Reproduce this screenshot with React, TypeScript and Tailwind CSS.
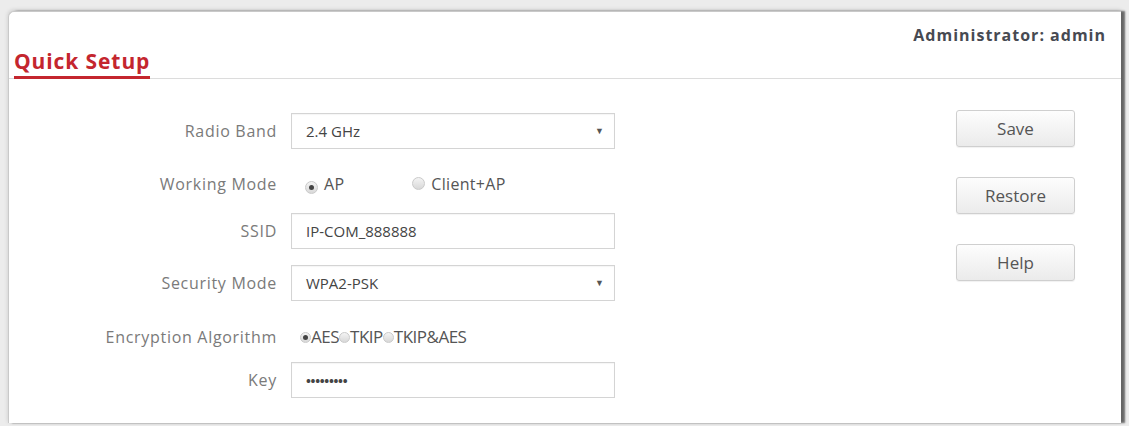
import React from "react";

const font = { fontFamily: '"Open Sans", "Noto Sans", sans-serif' };

function Radio({ checked, small }: { checked?: boolean; small?: boolean }) {
  return (
    <span
      className={`inline-flex items-center justify-center rounded-full border border-[#cacaca] bg-gradient-to-b from-[#f4f4f4] to-[#d8d8d8] ${
        small ? "w-[11px] h-[11px]" : "w-[13px] h-[13px]"
      }`}
    >
      {checked && <span className="w-[5px] h-[5px] rounded-full bg-[#444]" />}
    </span>
  );
}

function Label({ children }: { children: React.ReactNode }) {
  return (
    <div className="w-[268px] shrink-0 text-right text-[16px] tracking-[0.7px] text-[#7a7a7a]">{children}</div>
  );
}

function Box({ children, arrow }: { children: React.ReactNode; arrow?: boolean }) {
  return (
    <div className="ml-[14px] flex h-[36px] w-[324px] items-center justify-between border border-[#d4d4d4] pl-[14px] pr-[10px] text-[15px] text-[#444] shadow-[inset_0_1px_1px_rgba(0,0,0,0.04)]">
      <span>{children}</span>
      {arrow && <span className="text-[9px] text-[#555]">▼</span>}
    </div>
  );
}

function Btn({ children }: { children: React.ReactNode }) {
  return (
    <div className="flex h-[37px] w-[119px] items-center justify-center rounded-[3px] border border-[#cfcfcf] bg-gradient-to-b from-[#fdfdfd] to-[#ebebeb] text-[17px] text-[#555] shadow-[0_1px_1px_rgba(0,0,0,0.06)]">
      {children}
    </div>
  );
}

export default function App() {
  return (
    <div style={font} className="h-[426px] w-[1129px] overflow-hidden bg-[#ececec] pl-[8px] pt-[11px] pr-[8px] pb-[3px]">
      <div className="flex h-full flex-col rounded-tl-[6px] border-l border-t border-[#c9c9c9] bg-white shadow-[4px_0_2px_rgba(0,0,0,0.55),0_-1px_4px_rgba(0,0,0,0.15)]">
        <div className="relative flex h-[67px] items-end justify-between border-b border-[#dcdcdc] pl-[5px] pr-[15px]">
          <span className="mb-[-1px] border-b-[3px] border-[#c4262e] pb-[2px] text-[21px] font-bold leading-[26px] tracking-[0.9px] text-[#c4262e]">
            Quick Setup
          </span>
          <span className="absolute right-[15px] top-[11px] text-[16px] font-bold tracking-[1px] text-[#474a52]">
            Administrator: admin
          </span>
        </div>
        <div className="flex">
          <div className="flex flex-col">
            <div className="mt-[34px] flex items-center">
              <Label>Radio Band</Label>
              <Box arrow>2.4 GHz</Box>
            </div>
            <div className="mt-[17px] flex h-[36px] items-center">
              <Label>Working Mode</Label>
              <div className="ml-[14px] flex items-center text-[16px] tracking-[0.3px] text-[#555]">
                <span className="ml-[14px]"><Radio checked /></span>
                <span className="ml-[6px]">AP</span>
                <span className="ml-[68px]"><Radio /></span>
                <span className="ml-[6px]">Client+AP</span>
              </div>
            </div>
            <div className="mt-[11px] flex items-center">
              <Label>SSID</Label>
              <Box>IP-COM_888888</Box>
            </div>
            <div className="mt-[16px] flex items-center">
              <Label>Security Mode</Label>
              <Box arrow>WPA2-PSK</Box>
            </div>
            <div className="mt-[18px] flex h-[36px] items-center">
              <Label>Encryption Algorithm</Label>
              <div className="ml-[23px] flex items-center text-[17px] tracking-[-0.5px] text-[#555]">
                <Radio checked small />
                <span>AES</span>
                <Radio small />
                <span>TKIP</span>
                <Radio small />
                <span>TKIP&amp;AES</span>
              </div>
            </div>
            <div className="mt-[7px] flex items-center">
              <Label>Key</Label>
              <Box>
                <span className="text-[13px] font-bold tracking-[-0.3px]">•••••••••</span>
              </Box>
            </div>
          </div>
          <div className="ml-[341px] mt-[31px] flex flex-col gap-[30px]">
            <Btn>Save</Btn>
            <Btn>Restore</Btn>
            <Btn>Help</Btn>
          </div>
        </div>
      </div>
    </div>
  );
}
